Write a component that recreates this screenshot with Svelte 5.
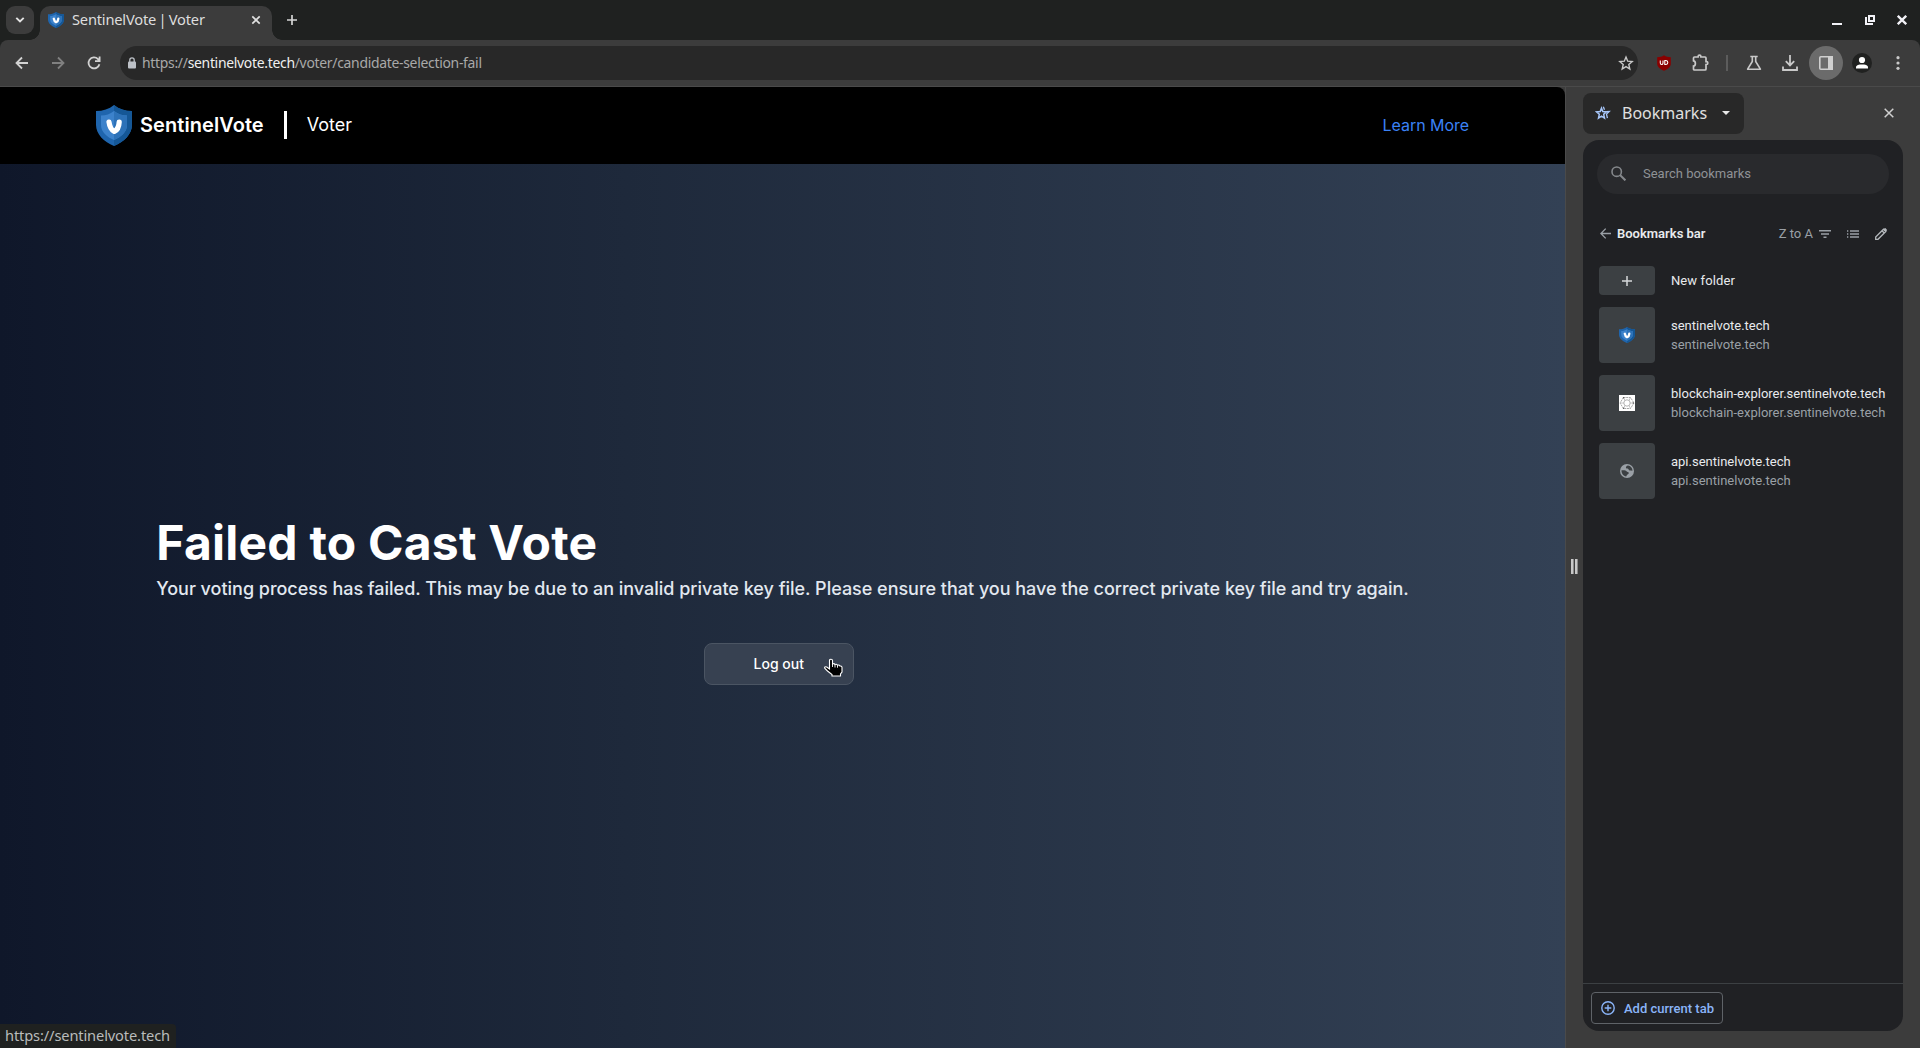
<script>
  const bookmarks = [
    { host: 'sentinelvote.tech', icon: 'shield' },
    { host: 'blockchain-explorer.sentinelvote.tech', icon: 'chain' },
    { host: 'api.sentinelvote.tech', icon: 'globe' }
  ];
</script>

{#snippet shield(w, h)}
  <svg width={w} height={h} viewBox="0 0 36 41" preserveAspectRatio="none">
    <path d="M18 0C13 4 7 6 0 6v14c0 9 8 17 18 21 10-4 18-12 18-21V6C29 6 23 4 18 0z" fill="#1f65ad" />
    <path d="M18 0c5 4 11 6 18 6v14c0 9-8 17-18 21z" fill="#155796" />
    <path d="M18 6C14 9 10 10.500 5 10.500V20c0 7 6 12 13 15 7-3 13-8 13-15v-9.500C26 10.500 22 9 18 6z" fill="#3c82cb" />
    <path d="M18 6c4 3 8 4.500 13 4.500V20c0 7-6 12-13 15z" fill="#2d72b8" />
    <path d="M13 17c.5 4 2.500 8 5.300 9.500C21.300 25 23 21 23.200 17" fill="none" stroke="#fff" stroke-width="5.200" stroke-linecap="round" stroke-linejoin="round" />
  </svg>
{/snippet}

<div class="window">
  <div class="tabstrip">
    <div class="tabsearch">
      <svg width="10" height="8" viewBox="0 0 10 8"><path d="M1.300 1.800L5 5.500l3.700-3.700" fill="none" stroke="#e3e3e3" stroke-width="1.900" /></svg>
    </div>
    <div class="tab">
      {@render shield(16, 16)}
      <span class="tabtitle">SentinelVote | Voter</span>
      <svg width="10" height="10" viewBox="0 0 10 10"><path d="M1.300 1.300l7.400 7.400M8.700 1.300L1.300 8.700" stroke="#e0e0e0" stroke-width="1.700" /></svg>
    </div>
    <div class="newtab">
      <svg width="10" height="10" viewBox="0 0 10 10"><path d="M5 0v10M0 5h10" stroke="#d5d5d5" stroke-width="1.700" /></svg>
    </div>
    <div class="winctl">
      <svg width="10" height="10" viewBox="0 0 10 10"><path d="M0 9h10" stroke="#f2f2f7" stroke-width="2" /></svg>
      <svg width="10" height="10" viewBox="0 0 10 10"><path d="M4 1h5v5H4zM1 2v7h7" fill="none" stroke="#f2f2f7" stroke-width="2" /></svg>
      <svg width="10" height="10" viewBox="0 0 10 10"><path d="M.8.8l8.400 8.400M9.200.8L.8 9.200" stroke="#f2f2f7" stroke-width="2.300" /></svg>
    </div>
  </div>

  <div class="toolbar">
    <div class="cell"><svg width="14" height="14" viewBox="0 0 14 14"><path d="M13 7H2M7 1.500L1.500 7 7 12.500" fill="none" stroke="#d2d2d2" stroke-width="1.800" /></svg></div>
    <div class="cell"><svg width="14" height="14" viewBox="0 0 14 14"><path d="M1 7h11M7 1.500L12.500 7 7 12.500" fill="none" stroke="#808080" stroke-width="1.800" /></svg></div>
    <div class="cell"><svg width="14" height="14" viewBox="0 0 14 14"><path d="M12.400 8.200A5.500 5.500 0 1 1 11 3.100L12.300 4.500M12.600.5v4.700H8" fill="none" stroke="#d2d2d2" stroke-width="1.800" /></svg></div>
    <div class="omnibox">
      <svg class="lock" width="8" height="12" viewBox="0 0 8 12"><rect y="4.500" width="8" height="7" rx="1" fill="#bcc0c6" /><path d="M1.800 5V3a2.200 2.200 0 0 1 4.400 0v2" fill="none" stroke="#bcc0c6" stroke-width="1.300" /></svg>
      <span class="url">https://<b>sentinelvote.tech</b>/voter/candidate-selection-fail</span>
      <svg width="16" height="16" viewBox="0 0 16 16"><path d="M8 2l1.700 4.200 4.500.4-3.400 3 1 4.400L8 11.600 4.200 14l1-4.400-3.400-3 4.500-.4z" fill="none" stroke="#c9c9c9" stroke-width="1.400" /></svg>
    </div>
    <div class="cell"><svg width="14" height="16" viewBox="0 0 14 16"><path d="M7 .3C5 1.700 3 2.200.2 2.200V9c0 3 3.300 5.300 6.800 6.800 3.500-1.500 6.800-3.800 6.800-6.800V2.200C11 2.200 9 1.700 7 .3z" fill="#8a0000" /><path d="M3.300 5.500v2.600q0 1.400 1.300 1.400t1.400-1.400V5.500M7.800 5.500V9.500H9q1.800-.1 1.800-2T9 5.500z" fill="none" stroke="#fff" stroke-width="1.100" /></svg></div>
    <div class="cell"><svg width="18" height="18" viewBox="0 0 18 18"><path d="M2.500 4q0-1 1-1h3.600V2.600a1.400 1.400 0 0 1 2.800 0V3h4.100q1 0 1 1v3.700h.4a1.400 1.400 0 0 1 0 2.800H15V15q0 1-1 1H3.500q-1 0-1-1v-2.900c2.500-.3 2.500-5 0-5.300z" fill="none" stroke="#c9c9c9" stroke-width="1.700" /></svg></div>
    <div class="sep"></div>
    <div class="cell"><svg width="16" height="16" viewBox="0 0 16 16"><path d="M4.300 1.500h7.400M6.300 1.500v5L1.600 14.200h12.800L9.700 6.500v-5" fill="none" stroke="#c9c9c9" stroke-width="1.600" stroke-linejoin="round" /></svg></div>
    <div class="cell"><svg width="16" height="16" viewBox="0 0 16 16"><path d="M8 0v10M3.800 6.200L8 10.400l4.200-4.200M1 11.500V15h14v-3.500" fill="none" stroke="#c9c9c9" stroke-width="1.800" /></svg></div>
    <div class="cell"><div class="active"><svg width="14" height="14" viewBox="0 0 14 14"><rect x=".8" y=".8" width="12.400" height="12.400" rx="1" fill="none" stroke="#cfcfcf" stroke-width="1.600" /><path d="M9 0h5v14H9z" fill="#cfcfcf" /></svg></div></div>
    <div class="cell"><svg width="20" height="20" viewBox="0 0 20 20"><circle cx="10" cy="10" r="10" fill="#202120" /><circle cx="10" cy="7" r="3.100" fill="#fff" /><path d="M4 15.500v-1.200C4 12 7 11.500 10 11.500s6 .5 6 2.800v1.200z" fill="#fff" /></svg></div>
    <div class="cell"><svg width="4" height="14" viewBox="0 0 4 14"><g fill="#c9c9c9"><circle cx="2" cy="1.700" r="1.600" /><circle cx="2" cy="7" r="1.600" /><circle cx="2" cy="12.300" r="1.600" /></g></svg></div>
  </div>

  <div class="body">
    <main class="page">
      <header>
        {@render shield(36, 41)}
        <span class="brand">SentinelVote</span>
        <span class="bar"></span>
        <span class="role">Voter</span>
        <a class="learn">Learn More</a>
      </header>
      <section>
        <div class="message">
          <h1>Failed to Cast Vote</h1>
          <p>Your voting process has failed. This may be due to an invalid private key file. Please ensure that you have the correct private key file and try again.</p>
          <button class="logout">Log out</button>
        </div>
      </section>
      <svg class="pointer" width="19" height="19" viewBox="0 0 19 19"><path d="M5.500 2.500C5.500.8 8.500.8 8.500 2.500V6c1-.5 2-.3 2.500.5 1-.4 2-.2 2.500.7 1-.3 2-.1 2.500.8.800-.2 2 .2 2 1.500V14l-1.500 2v2H8v-1.500L3.500 13 .9 10.500C0 9.300 1.500 8.300 2.700 9l2.800 2z" fill="#000" stroke="#fff" stroke-width="1.100" /><path d="M8.500 6v3M11 6.500v3M13.500 7.200v2.500" stroke="#fff" stroke-width=".9" /></svg>
      <div class="status">https://sentinelvote.tech</div>
    </main>

    <div class="resizer"><i></i><i></i></div>

    <aside>
      <div class="sidehead">
        <div class="picker">
          <svg width="16" height="16" viewBox="0 0 16 16"><path d="M6.500 3.200l1.300 3.400 3.600.3-2.700 2.400.8 3.800-3-1.900-3 1.900.8-3.800-2.700-2.400 3.600-.3z" fill="none" stroke="#a8c7fa" stroke-width="1.500" /><path d="M8.300 1.800l1.200 3M11.200 6.700l3-.2-2.700 2.600.9 4" fill="none" stroke="#a8c7fa" stroke-width="1.300" /></svg>
          <span>Bookmarks</span>
          <svg class="caret" width="8" height="4" viewBox="0 0 8 4"><path d="M0 0h8L4 4z" fill="#e8e8e8" /></svg>
        </div>
        <svg class="sideclose" width="10" height="10" viewBox="0 0 10 10"><path d="M.7.7l8.600 8.600M9.300.7L.7 9.300" stroke="#d0d0d0" stroke-width="1.500" /></svg>
      </div>
      <div class="panel">
        <div class="search">
          <svg width="15" height="15" viewBox="0 0 15 15"><circle cx="5.700" cy="5.700" r="4.700" fill="none" stroke="#85888c" stroke-width="1.600" /><path d="M9 9l5.400 5.400" stroke="#85888c" stroke-width="2" /></svg>
          <span>Search bookmarks</span>
        </div>
        <div class="crumb">
          <svg width="11" height="11" viewBox="0 0 11 11"><path d="M11 5.500H1M5.700.6L.9 5.500l4.800 4.900" fill="none" stroke="#9aa0a6" stroke-width="1.300" /></svg>
          <strong>Bookmarks bar</strong>
          <span class="sort">Z to A</span>
          <svg width="12" height="8" viewBox="0 0 12 8"><path d="M0 .8h12M2 4h8M4.500 7.200h3" stroke="#9aa0a6" stroke-width="1.400" /></svg>
          <svg class="list" width="12" height="8" viewBox="0 0 12 8"><path d="M0 1h1.300M0 4h1.300M0 7h1.300M3 1h9M3 4h9M3 7h9" stroke="#9aa0a6" stroke-width="1.300" /></svg>
          <svg class="pencil" width="12" height="12" viewBox="0 0 12 12"><path d="M.7 11.300V9L8.500 1.200 10.800 3.500 3 11.300zM7 2.700L9.300 5" fill="none" stroke="#b4b8bc" stroke-width="1.300" /><path d="M8.300 1.500L9.600.2q.5-.3 1 .1l1.100 1.100q.5.500.1 1L10.500 3.700z" fill="#b4b8bc" /></svg>
        </div>
        <div class="row folder">
          <div class="thumb"><svg width="10" height="10" viewBox="0 0 10 10"><path d="M5 0v10M0 5h10" stroke="#d5d7da" stroke-width="1.500" /></svg></div>
          <span>New folder</span>
        </div>
        {#each bookmarks as b}
          <div class="row">
            <div class="thumb">
              {#if b.icon === 'shield'}
                {@render shield(16, 16)}
              {:else if b.icon === 'chain'}
                <svg width="16" height="16" viewBox="0 0 16 16"><path d="M0 0h16v16H0z" fill="#fff" /><g fill="none" stroke="#909090" stroke-width=".8"><path d="M4.500 2.500h7L15 8l-3.500 5.500h-7L1 8z" stroke-dasharray="2 .7" /><circle cx="8" cy="8" r="3.200" stroke="#a0a0a0" /><path d="M4.500 2.500L6 5.500M11.500 2.500L10 5.500M15 8h-4M11.500 13.500L10 10.500M4.500 13.500L6 10.500M1 8h4" stroke="#b5b5b5" /></g><g fill="#555"><circle cx="4.500" cy="2.700" r=".7" /><circle cx="14.300" cy="8" r=".7" /><circle cx="4.500" cy="13.300" r=".7" /></g></svg>
              {:else}
                <svg width="14" height="14" viewBox="0 0 14 14"><circle cx="7" cy="7" r="7" fill="#9aa0a6" /><path d="M8 1.500C6.500 1.800 5.700 2.800 6 4c.8.800 2 .4 2.500 1.200.3 1 1.300 1.400 2.300 1.200l1.700.3C12.500 4 10.600 1.900 8 1.500zM1.500 6.300c1.800 0 4.200-.3 5 .9.500.9 2.200.5 2.300 1.800 0 1.400-1.700 1.200-2 2.300l-.6 1.200C3.500 12.200 1.300 9.600 1.500 6.300z" fill="#3c4043" /></svg>
              {/if}
            </div>
            <div class="names"><span>{b.host}</span><small>{b.host}</small></div>
          </div>
        {/each}
        <footer>
          <div class="add">
            <svg width="14" height="14" viewBox="0 0 14 14"><circle cx="7" cy="7" r="6.200" fill="none" stroke="#8ab4f8" stroke-width="1.400" /><path d="M7 3.700v6.600M3.700 7h6.600" stroke="#8ab4f8" stroke-width="1.400" /></svg>
            <span>Add current tab</span>
          </div>
        </footer>
      </div>
    </aside>
  </div>
</div>

<style>
  :global(body) { margin: 0; background: #1f2120; }
  * { box-sizing: border-box; }
  svg { display: block; flex: none; }
  .window { width: 1920px; height: 1048px; display: flex; flex-direction: column; overflow: hidden; background: #1f2120; font-family: 'Noto Sans', sans-serif; white-space: nowrap; }

  .tabstrip { height: 40px; flex: none; display: flex; padding: 6px 13px 0 6px; }
  .tabsearch { width: 28px; height: 28px; border-radius: 9px; background: #3c3c3c; display: grid; place-items: center; }
  .tab { position: relative; width: 232px; height: 34px; margin-left: 6px; padding: 0 11px 6px 8px; border-radius: 10px 10px 0 0; background: #3c3c3c; display: flex; align-items: center; }
  .tab::before, .tab::after { content: ''; position: absolute; bottom: 0; width: 10px; height: 10px; }
  .tab::before { left: -10px; background: radial-gradient(circle at 0 0, transparent 9.500px, #3c3c3c 10px); }
  .tab::after { right: -10px; background: radial-gradient(circle at 100% 0, transparent 9.500px, #3c3c3c 10px); }
  .tabtitle { flex: 1; margin-left: 8px; padding-bottom: 1px; font-size: 14.670px; line-height: 27px; letter-spacing: -.2px; word-spacing: -1.200px; color: #dedede; }
  .newtab { width: 40px; height: 28px; display: grid; place-items: center; }
  .winctl { margin-left: auto; height: 28px; display: flex; align-items: center; gap: 22.500px; }

  .toolbar { height: 47px; flex: none; padding: 0 4px; background: #3c3c3c; border-bottom: 1px solid #4a4a4a; border-radius: 8px 8px 0 0; display: flex; align-items: center; }
  .cell { width: 36px; height: 34px; display: grid; place-items: center; }
  .omnibox { flex: 1; height: 34px; margin: 0 8px; padding: 0 4px 0 8px; border-radius: 17px; background: #282828; display: flex; align-items: center; }
  .url { flex: 1; margin-left: 6px; font-size: 13.950px; line-height: 34px; letter-spacing: -.3px; color: #a9a9a9; }
  .url b { font-weight: 400; color: #f0f0f0; }
  .sep { width: 2px; height: 16px; margin: 0 8px; background: #5c5c5c; }
  .active { width: 34px; height: 34px; border-radius: 50%; background: #6b6b6b; display: grid; place-items: center; }

  .body { flex: 1; display: flex; background: #3c3c3c; min-height: 0; }
  .page { position: relative; width: 1565px; display: flex; flex-direction: column; border-radius: 0 8px 0 0; overflow: hidden; font-family: Inter, sans-serif; }
  header { height: 77px; flex: none; padding: 0 96px 1px; background: #000; display: flex; align-items: center; color: #fff; }
  .brand { margin-left: 8px; padding-bottom: 1px; font-size: 20px; font-weight: 600; letter-spacing: .07px; }
  .bar { width: 3px; height: 28px; margin: 0 20px; background: #fff; }
  .role { padding-bottom: 1px; font-size: 18px; }
  .learn { margin-left: auto; padding-bottom: 1px; font-size: 16px; letter-spacing: -.04px; color: #3b82f6; }
  section { flex: 1; display: flex; justify-content: center; align-items: center; padding-bottom: 8px; background: linear-gradient(to right, #0f172a, #1e293b 40%, #334155); }
  .message { display: flex; flex-direction: column; }
  h1 { margin: 0; font-size: 48px; line-height: 48px; font-weight: 700; letter-spacing: .23px; color: #fff; }
  p { margin: 8px 0 0; font-size: 18px; line-height: 28px; font-weight: 500; letter-spacing: -.02px; color: #e2e8f0; }
  .logout { width: 150px; height: 42px; margin: 40px 0 0 548px; padding: 0 1px 2px 0; border: 1px solid #4b5563; border-radius: 8px; background: #374151; font: 500 14px Inter, sans-serif; color: #fff; }
  .pointer { position: absolute; left: 824px; top: 571px; }
  .status { position: absolute; left: 0; bottom: 0; width: 176px; height: 24px; padding-left: 5px; border-radius: 0 4px 0 0; background: #1f2120; font: 14.670px/22px 'Noto Sans', sans-serif; letter-spacing: -.14px; color: #b9bcbc; }

  .resizer { width: 18px; border-left: 1px solid #4a4a4a; display: flex; align-items: center; justify-content: center; gap: 1px; padding: 0 1px 2px 0; }
  .resizer i { width: 3px; height: 15px; background: #c7c7c7; border: solid #8a8a8a; border-width: 0 1px 0 0; }

  aside { width: 320px; padding: 6px 0 17px; display: flex; flex-direction: column; }
  .sidehead { height: 41px; display: flex; align-items: center; justify-content: space-between; padding-right: 9px; }
  .picker { width: 161px; height: 41px; border-radius: 8px; padding: 0 14px 1px 12px; background: #282828; display: flex; align-items: center; font-size: 16px; color: #e0e0e0; }
  .picker span { margin-left: 11px; padding-bottom: 1px; }
  .caret { margin-left: auto; }
  .sideclose { margin-bottom: 2px; }
  .panel { flex: 1; margin-top: 6px; padding: 14px 0 0; border-radius: 16px; background: #202124; display: flex; flex-direction: column; font-family: Roboto, sans-serif; font-size: 13px; color: #e8eaed; }
  .search { height: 40px; margin: 0 14px; padding: 0 0 2px 14px; border-radius: 20px; background: #292a2d; display: flex; align-items: center; gap: 17px; color: #8f9296; }
  .crumb { height: 40px; margin: 20px 16px 12px 17px; padding-bottom: 1px; display: flex; align-items: center; }
  .crumb strong { font-weight: 600; margin-left: 6px; padding-bottom: 1px; }
  .sort { margin: 0 6px 0 auto; padding-bottom: 1px; color: #9aa0a6; }
  .list { margin-left: 16px; }
  .pencil { margin-left: 16px; }
  .row { height: 56px; margin: 0 0 12px 16px; display: flex; align-items: center; gap: 16px; }
  .folder { height: 29px; letter-spacing: .1px; }
  .thumb { width: 56px; height: 100%; border-radius: 4px; background: #3c4043; display: grid; place-items: center; }
  .names { display: flex; flex-direction: column; line-height: 19px; }
  small { font-size: 13px; color: #9aa0a6; }
  footer { height: 48px; margin-top: auto; padding: 8px; border-top: 1px solid #3c4043; }
  .add { width: 132px; height: 32px; padding-left: 9px; border: 1px solid #5f6368; border-radius: 4px; display: flex; align-items: center; gap: 9px; color: #8ab4f8; font-weight: 500; }
</style>
